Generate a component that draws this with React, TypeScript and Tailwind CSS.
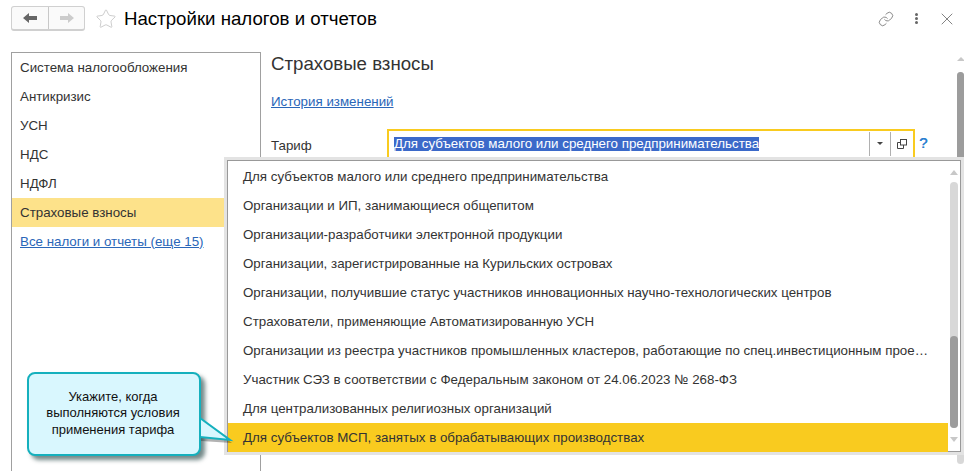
import { Star, Link, X } from 'lucide-react'

const sections = ['Система налогообложения', 'Антикризис', 'УСН', 'НДС', 'НДФЛ']

const tariffs = [
  'Для субъектов малого или среднего предпринимательства',
  'Организации и ИП, занимающиеся общепитом',
  'Организации-разработчики электронной продукции',
  'Организации, зарегистрированные на Курильских островах',
  'Организации, получившие статус участников инновационных научно-технологических центров',
  'Страхователи, применяющие Автоматизированную УСН',
  'Организации из реестра участников промышленных кластеров, работающие по спец.инвестиционным прое…',
  'Участник СЭЗ в соответствии с Федеральным законом от 24.06.2023 № 268-ФЗ',
  'Для централизованных религиозных организаций',
]

export default function App() {
  return (
    <div className="relative w-[964px] h-[471px] overflow-hidden bg-white font-['Liberation_Sans',Arial,sans-serif] text-[13.33px] text-[#333]">
      {/* шапка */}
      <header className="flex items-center h-[37px] pl-[11px] pr-[12px]">
        <div className="flex h-[25px] w-[74px] rounded-[3px] border border-[#d0d0d0] border-b-2 bg-[#fafafa]">
          <button className="flex w-[37px] items-center justify-center border-r border-[#c8c8c8]">
            <svg width="14" height="10" viewBox="0 0 14 10"><path d="M0 5 L6 0 V3 H14 V7 H6 V10 Z" fill="#666" /></svg>
          </button>
          <button className="flex flex-1 items-center justify-center">
            <svg width="14" height="10" viewBox="0 0 14 10"><path d="M14 5 L8 0 V3 H0 V7 H8 V10 Z" fill="#ccc" /></svg>
          </button>
        </div>
        <Star size={22} strokeWidth={1} className="ml-[10px] text-[#c8c8c8]" />
        <h1 className="ml-[7px] text-[18.66px] text-black">Настройки налогов и отчетов</h1>
        <div className="ml-auto flex items-center text-[#777]">
          <Link size={16} strokeWidth={1.3} className="-ml-[1px]" />
          <div className="ml-[21px] flex flex-col gap-[1px]">
            <span className="h-[3px] w-[3px] rounded-full bg-[#666]" />
            <span className="h-[3px] w-[3px] rounded-full bg-[#666]" />
            <span className="h-[3px] w-[3px] rounded-full bg-[#666]" />
          </div>
          <X size={20} strokeWidth={1.1} className="ml-[19px] -mr-[5px]" />
        </div>
      </header>

      <div className="flex pt-[15px] pl-[11px] h-[434px]">
        {/* список разделов */}
        <aside className="w-[250px] h-[440px] border border-[#a0a0a0] shrink-0">
          {sections.map((s) => (
            <div key={s} className="flex h-[29px] items-center pl-[8px]">{s}</div>
          ))}
          <div className="flex h-[29px] items-center pl-[8px] bg-[#fde28a]">Страховые взносы</div>
          <div className="flex h-[29px] items-center pl-[8px] text-[#2a66b8] underline">Все налоги и отчеты (еще 15)</div>
        </aside>

        {/* правая часть */}
        <main className="pl-[10px] flex-1">
          <h2 className="text-[18.66px] leading-[22px] pt-[1px]">Страховые взносы</h2>
          <a className="block mt-[17px] text-[#2a66b8] underline">История изменений</a>
          <div className="flex items-start mt-[17px]">
            <span className="w-[116px] pt-[7px]">Тариф</span>
            <div className="flex h-[40px] w-[528px] border-2 border-[#f9cb1f] pl-[5px]">
              <span className="mt-[6px] h-[14px] leading-[14px] bg-[#3b69c9] text-white">Для субъектов малого или среднего предпринимательства</span>
              <div className="ml-auto mt-[1px] flex h-[24px]">
                <div className="flex w-[21px] items-center justify-center border-l border-[#b0b0b0]">
                  <span className="border-x-[3px] border-t-[3px] border-x-transparent border-t-[#444]" />
                </div>
                <div className="flex w-[23px] items-center justify-center border-l border-[#b0b0b0]">
                  <svg width="10" height="10" viewBox="0 0 10 10" fill="none" stroke="#444" strokeWidth="1">
                    <rect x="3.5" y="0.5" width="6" height="5.5" />
                    <path d="M3.5 3.5H0.5V9.5H6.5V6" />
                  </svg>
                </div>
              </div>
            </div>
            <span className="ml-[4px] pt-[5px] text-[15px] leading-[18px] text-[#2a7fd0] [text-shadow:0.4px_0_0_#2a7fd0]">?</span>
          </div>
        </main>
      </div>

      {/* главная полоса прокрутки */}
      <div className="absolute right-0 top-[57px] flex w-[7px] flex-col items-center">
        <span className="border-x-[4px] border-b-[4px] border-x-transparent border-b-[#c8c8c8]" />
        <div className="mt-[11px] h-[392px] w-[7px] rounded-[4px] bg-[#d8d8d8]">
          <div className="h-[110px] rounded-t-[4px] bg-[#9c9c9c]" />
        </div>
      </div>

      {/* выпадающий список */}
      <div className="absolute left-[224px] top-[157px] flex h-[298px] w-[740px] border-[3px] border-[#e3e3e3] bg-white">
        <div className="flex flex-1 border border-[#999]">
          <ul className="w-[720px] pt-[1px]">
            {tariffs.map((t) => (
              <li key={t} className="flex h-[29px] items-center pl-[15px] whitespace-nowrap">{t}</li>
            ))}
            <li className="flex h-[29px] items-center pl-[15px] bg-[#f9cb1f]">Для субъектов МСП, занятых в обрабатывающих производствах</li>
          </ul>
          <div className="flex flex-1 flex-col items-center pt-[9px]">
            <span className="border-x-[4px] border-b-[5px] border-x-transparent border-b-[#c8c8c8]" />
            <div className="relative mt-[7px] h-[246px] w-[8px] rounded-[4px] bg-[#d8d8d8]">
              <div className="absolute bottom-0 h-[92px] w-[8px] rounded-[4px] bg-[#9c9c9c]" />
            </div>
            <span className="mt-[9px] border-x-[4px] border-t-[5px] border-x-transparent border-t-[#c8c8c8]" />
          </div>
        </div>
      </div>

      {/* подсказка */}
      <svg className="absolute left-[198px] top-[417px]" width="36" height="28" viewBox="0 0 36 28">
        <path d="M3 4 L34 26 L3 24 Z" fill="#000" opacity="0.3" />
      </svg>
      <div className="absolute left-[27px] top-[372px] flex h-[84px] w-[174px] items-center justify-center rounded-[8px] border-2 border-[#15b0bd] bg-[#d9f7fe] text-center text-[13px] leading-[16.5px] text-[#111] shadow-[4px_4px_4px_rgba(0,40,40,0.55)]">
        <p className="pb-[1px] pr-[2px]">Укажите, когда<br />выполняются условия<br />применения тарифа</p>
      </div>
      <svg className="absolute left-[198px] top-[417px]" width="36" height="28" viewBox="0 0 36 28">
        <path d="M3 1 L32 23 L3 20" fill="#d9f7fe" stroke="none" />
        <path d="M2 1 L32 23 L2 20" fill="none" stroke="#15b0bd" strokeWidth="2" />
      </svg>
    </div>
  )
}
